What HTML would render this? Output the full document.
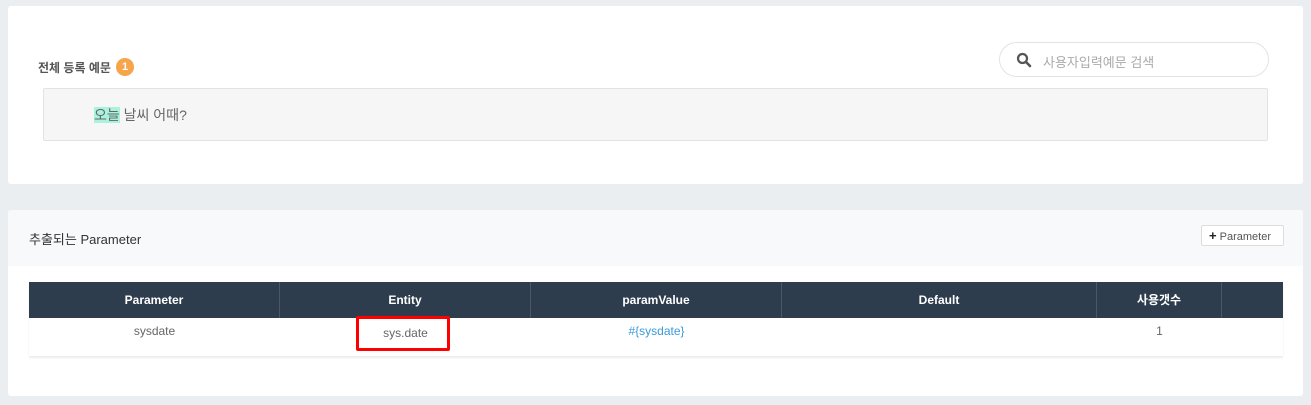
<!DOCTYPE html>
<html><head><meta charset="utf-8">
<style>
*{margin:0;padding:0;box-sizing:border-box}
body{width:1311px;height:405px;background:#ebeef1;font-family:"Liberation Sans","Noto Sans CJK KR",sans-serif;position:relative;overflow:hidden}
.card{position:absolute;left:8px;width:1295px;background:#fff;border-radius:3px}
.abs{position:absolute}
.th{position:absolute;top:0;height:36px;line-height:36px;color:#fff;font-size:12px;font-weight:bold;text-align:center;border-right:1px solid #4a5866}
.td{position:absolute;top:6px;font-size:12px;color:#666;text-align:center}
</style></head><body>
<div class="card" style="top:6px;height:178px"></div>
<div class="abs" style="left:38px;top:59px;font-size:12px;font-weight:bold;color:#555">전체 등록 예문</div>
<div class="abs" style="left:116px;top:58px;width:18px;height:18px;border-radius:9px;background:#f6a54a;color:#fff;font-size:11px;font-weight:bold;text-align:center;line-height:18px">1</div>
<div class="abs" style="left:43px;top:88px;width:1225px;height:53px;background:#f6f6f6;border:1px solid #e3e3e3;border-radius:2px"></div>
<div class="abs" style="left:94px;top:106px;font-size:14px;color:#666;line-height:18px"><span style="background:#a9f2de">오늘</span> 날씨 어때?</div>
<div class="abs" style="left:999px;top:42px;width:270px;height:35px;border:1px solid #e3e3e3;border-radius:18px;background:#fff"></div>
<svg class="abs" style="left:1016px;top:52px" width="16" height="16" viewBox="0 0 16 16"><circle cx="6.5" cy="6.5" r="4.5" fill="none" stroke="#555" stroke-width="2.2"/><line x1="10" y1="10" x2="14" y2="14" stroke="#555" stroke-width="2.6" stroke-linecap="round"/></svg>
<div class="abs" style="left:1043px;top:52px;font-size:13px;color:#aaa">사용자입력예문 검색</div>

<div class="card" style="top:210px;height:186px;overflow:hidden">
 <div style="height:56px;background:#f8f9fb"></div>
</div>
<div class="abs" style="left:29px;top:229px;font-size:13px;color:#333">추출되는 Parameter</div>
<div class="abs" style="left:1201px;top:225px;width:83px;height:21px;border:1px solid #ddd;border-radius:2px;background:#fff;font-size:11px;color:#555;line-height:19px;padding-left:7px"><b style="color:#222;font-size:13px">+</b> Parameter</div>

<div class="abs" style="left:29px;top:282px;width:1254px;height:74px;box-shadow:0 2px 2px rgba(0,0,0,0.08)">
 <div style="height:36px;background:#2e3d4d;position:relative">
  <div class="th" style="left:0;width:251px">Parameter</div>
  <div class="th" style="left:251px;width:251px">Entity</div>
  <div class="th" style="left:502px;width:251px">paramValue</div>
  <div class="th" style="left:753px;width:315px">Default</div>
  <div class="th" style="left:1068px;width:125px">사용갯수</div>
 </div>
 <div style="position:relative;height:37px;background:#fff">
  <div class="td" style="left:0;width:251px">sysdate</div>
  <div class="td" style="left:251px;width:251px;top:8px">sys.date</div>
  <div class="td" style="left:502px;width:251px;color:#3a9ad9">#{sysdate}</div>
  <div class="td" style="left:1068px;width:125px">1</div>
 </div>
</div>
<div class="abs" style="left:356px;top:316px;width:94px;height:35px;border:3px solid #f00;border-radius:2px"></div>
</body></html>
